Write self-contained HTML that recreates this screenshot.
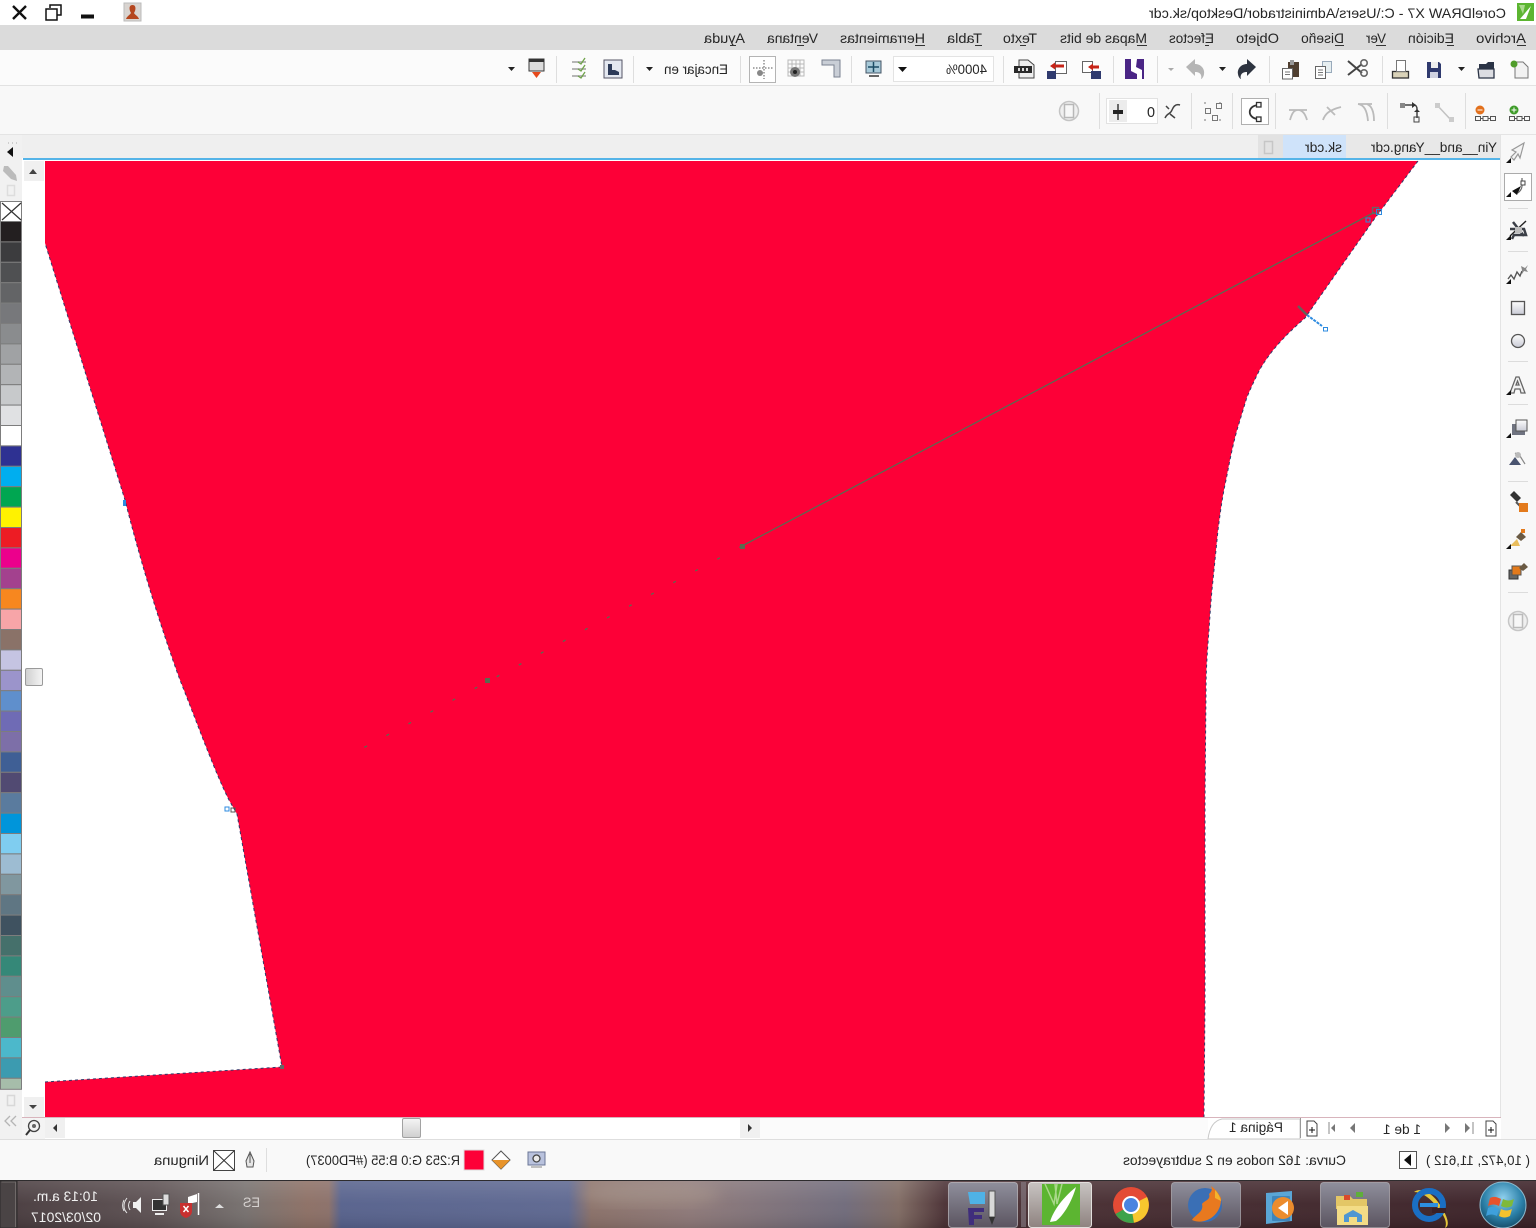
<!DOCTYPE html>
<html><head><meta charset="utf-8"><title>CorelDRAW X7</title>
<style>
html,body{margin:0;padding:0;background:#fff;overflow:hidden}
svg{display:block;position:absolute;left:0;top:0}
text{font-family:"Liberation Sans",sans-serif;font-size:14px;fill:#262626}
</style></head><body>
<svg width="1536" height="1228" viewBox="0 0 1536 1228" xmlns="http://www.w3.org/2000/svg">
<defs>
<linearGradient id="tb" x1="0" x2="1" y1="0" y2="0">
<stop offset="0" stop-color="#46393c"/><stop offset=".1" stop-color="#5c5052"/><stop offset=".16" stop-color="#76706e"/><stop offset=".2" stop-color="#8c6f64"/><stop offset=".214" stop-color="#8a6f68"/><stop offset=".222" stop-color="#56618c"/><stop offset=".37" stop-color="#5d6790"/><stop offset=".385" stop-color="#8a7068"/><stop offset=".45" stop-color="#8d7878"/><stop offset=".55" stop-color="#6f6a7a"/><stop offset=".585" stop-color="#7f6a62"/><stop offset=".615" stop-color="#4a3034"/><stop offset="1" stop-color="#3a2026"/>
</linearGradient>
<linearGradient id="gl" x1="0" x2="0" y1="0" y2="1"><stop offset="0" stop-color="#fff" stop-opacity=".14"/><stop offset=".5" stop-color="#fff" stop-opacity=".03"/><stop offset="1" stop-color="#000" stop-opacity=".1"/></linearGradient>
<linearGradient id="btn" x1="0" x2="0" y1="0" y2="1"><stop offset="0" stop-color="#8f8f9c"/><stop offset="1" stop-color="#5b5460"/></linearGradient>
<linearGradient id="btn2" x1="0" x2="0" y1="0" y2="1"><stop offset="0" stop-color="#c8c4c2"/><stop offset="1" stop-color="#8e827f"/></linearGradient>
<linearGradient id="th" x1="0" x2="0" y1="0" y2="1"><stop offset="0" stop-color="#f5f5f5"/><stop offset="1" stop-color="#cfcfcf"/></linearGradient>
<linearGradient id="th2" x1="0" x2="1" y1="0" y2="0"><stop offset="0" stop-color="#cfcfcf"/><stop offset="1" stop-color="#f5f5f5"/></linearGradient>
<linearGradient id="sh" x1="0" x2="0" y1="0" y2="1"><stop offset="0" stop-color="#fdfdfd"/><stop offset="1" stop-color="#c9cbd6"/></linearGradient>
<radialGradient id="orb" cx=".5" cy=".35" r=".7"><stop offset="0" stop-color="#8fd0ee"/><stop offset=".6" stop-color="#2b80a8"/><stop offset="1" stop-color="#12455f"/></radialGradient>
<filter id="bl"><feGaussianBlur stdDeviation="7"/></filter>
</defs>

<!-- bars -->
<rect width="1536" height="25" fill="#fff"/>
<rect y="25" width="1536" height="25" fill="#dbdbdb"/>
<rect y="50" width="1536" height="35" fill="#fbfbfb"/>
<rect y="85" width="1536" height="1" fill="#e2e2e2"/>
<rect y="86" width="1536" height="48" fill="#f8f8f8"/>
<rect y="134" width="1536" height="1" fill="#e4e4e4"/>
<rect y="135" width="1536" height="23" fill="#efefef"/>

<!-- title -->
<g>
<rect x="1517" y="3" width="17" height="18" fill="#5cb531"/>
<path d="M1520 19 L1531 6 L1526 19Z" fill="#fff"/>
<path d="M1519 5 l4 9 l2-9z" fill="#cfe8b8" opacity=".7"/>
<text transform="matrix(-1 0 0 1 1506 18)" textLength="357" lengthAdjust="spacingAndGlyphs">CorelDRAW X7 - C:\Users\Administrador\Desktop\sk.cdr</text>
<path d="M13 6 L26 19 M26 6 L13 19" stroke="#111" stroke-width="2.4" fill="none"/>
<rect x="46" y="9" width="11" height="11" fill="#fff" stroke="#111" stroke-width="1.5"/>
<path d="M50 8 V5 H61 V15 H57" fill="none" stroke="#111" stroke-width="1.5"/>
<rect x="81" y="14.500" width="13" height="4" fill="#111"/>
<rect x="124" y="3" width="17" height="18" fill="#d9d4d0" stroke="#bbb"/>
<path d="M132.500 5 c3 0 3.500 3 2.500 6 l-1 2 c1 2 4 3 5 6 h-13 c1-3 4-4 5-6 l-1-2 c-1-3-.5-6 2.500-6z" fill="#b5461e"/>
</g>

<!-- menu -->
<g>
<text transform="matrix(-1 0 0 1 1526 43)" textLength="50" lengthAdjust="spacingAndGlyphs">Archivo</text>
<text transform="matrix(-1 0 0 1 1454 43)" textLength="46" lengthAdjust="spacingAndGlyphs">Edición</text>
<text transform="matrix(-1 0 0 1 1386 43)" textLength="20" lengthAdjust="spacingAndGlyphs">Ver</text>
<text transform="matrix(-1 0 0 1 1344 43)" textLength="43" lengthAdjust="spacingAndGlyphs">Diseño</text>
<text transform="matrix(-1 0 0 1 1279 43)" textLength="43" lengthAdjust="spacingAndGlyphs">Objeto</text>
<text transform="matrix(-1 0 0 1 1214 43)" textLength="45" lengthAdjust="spacingAndGlyphs">Efectos</text>
<text transform="matrix(-1 0 0 1 1147 43)" textLength="87" lengthAdjust="spacingAndGlyphs">Mapas de bits</text>
<text transform="matrix(-1 0 0 1 1037 43)" textLength="34" lengthAdjust="spacingAndGlyphs">Texto</text>
<text transform="matrix(-1 0 0 1 982 43)" textLength="35" lengthAdjust="spacingAndGlyphs">Tabla</text>
<text transform="matrix(-1 0 0 1 925 43)" textLength="85" lengthAdjust="spacingAndGlyphs">Herramientas</text>
<text transform="matrix(-1 0 0 1 818 43)" textLength="51" lengthAdjust="spacingAndGlyphs">Ventana</text>
<text transform="matrix(-1 0 0 1 745 43)" textLength="41" lengthAdjust="spacingAndGlyphs">Ayuda</text>
<path d="M1517 45.500h9M1447 45.500h7M1376 45.500h10M1335 45.500h9M1205 45.500h4M1137 45.500h10M1020 45.500h6M975 45.500h7M915 45.500h10M797 45.500h7M730 45.500h6" stroke="#333" stroke-width="1"/>
</g>

<!-- toolbar separators -->
<path d="M1382.500 56v27M1269.500 56v27M1157.500 56v27M1113.500 56v27M1003.500 56v27M851.500 56v27M740.500 56v27M633.500 56v27M556.500 56v27M1465.500 93v36M1387.500 93v36M1275.500 93v36M1232.500 93v36M1191.500 93v36M1099.500 93v36" stroke="#dedede"/>

<!-- row 1 icons -->
<g>
<path d="M1515 62h8l5 5v11h-13z" fill="#f2f2f2" stroke="#777"/><circle cx="1514" cy="64" r="3.500" fill="#4f9c2a"/>
<path d="M1479 64h7l2-2h6v9h-15z" fill="#2b3446"/><path d="M1478 69h16v9h-15z" fill="#dcdde2" stroke="#2b3446" stroke-width="1.300"/>
<path d="M1458 67h7l-3.500 4z" fill="#222"/>
<path d="M1427 62h12l2 2v14h-14z" fill="#2f3a6e"/><rect x="1431" y="62" width="7" height="6" fill="#eee"/><rect x="1430" y="72" width="8" height="6" fill="#cfd2e0"/>
<rect x="1392.500" y="71.500" width="16" height="6.500" fill="#d9d2b8" stroke="#333" stroke-width="1.300"/><rect x="1396.500" y="60.500" width="9" height="11" fill="#fff" stroke="#777"/>
<path d="M1348 61l14 12M1348 75l14-11" stroke="#444" stroke-width="2"/><circle cx="1364" cy="63" r="3.200" fill="none" stroke="#666" stroke-width="1.600"/><circle cx="1364" cy="73" r="3.200" fill="none" stroke="#666" stroke-width="1.600"/>
<rect x="1322.500" y="61.500" width="9" height="11" fill="#e6eef0" stroke="#9ab"/><rect x="1315.500" y="66.500" width="10" height="12" fill="#fff" stroke="#666"/><path d="M1318 70h5M1318 72.500h5M1318 75h5" stroke="#777"/>
<rect x="1288" y="62" width="11" height="15" fill="#4f3f30"/><rect x="1290" y="60" width="4" height="5" fill="#999"/><rect x="1282.500" y="68.500" width="10" height="10.500" fill="#fff" stroke="#666"/><path d="M1285 72h5M1285 74.500h5" stroke="#777"/>
<path d="M1256 67l-9-8v5c-6 0-10 5-9 10c0 2 2 5 3 5c-1-3 0-7 6-7v4z" fill="#2e3440"/>
<path d="M1219 67h7l-3.500 4z" fill="#222"/>
<path d="M1186 67l9-8v5c6 0 10 5 9 10c0 2-2 5-3 5c1-3 0-7-6-7v4z" fill="#b5b5b5"/>
<path d="M1168 68h6l-3 3z" fill="#aaa"/>
<rect x="1125" y="59" width="19" height="20" fill="#4a2585"/><path d="M1131 59h6l-1 8 6 3v9h-5l0-5-6-3z" fill="#fff"/>
<rect x="1055.500" y="61.500" width="11" height="12" fill="#fff" stroke="#666"/><rect x="1047" y="71" width="9" height="8" fill="#2f3a6e"/><path d="M1050 66l5-3.500v2h9v3h-9v2z" fill="#c62418"/>
<rect x="1082.500" y="61.500" width="10" height="11" fill="#fff" stroke="#666"/><rect x="1091" y="71" width="10" height="8" fill="#2f3a6e"/><path d="M1088 67l5-3.500v2h6v3h-6v2z" fill="#c62418"/>
<path d="M1019 60h9l6 5v13h-15z" fill="#eee" stroke="#444"/><rect x="1014" y="66" width="18" height="7" fill="#2a2a2a"/><path d="M1014 69.500l3-3.500v7z" fill="#2a2a2a"/><path d="M1018 68h2v3h-2zM1022 68h2v3h-2zM1026 68h2v3h-2z" fill="#ddd"/>
<rect x="893.500" y="56.500" width="100" height="25" fill="#fff" stroke="#e3e3e3"/>
<text transform="matrix(-1 0 0 1 987 74)" textLength="41" lengthAdjust="spacingAndGlyphs">4000%</text>
<path d="M898 67h9l-4.500 5z" fill="#111"/>
<rect x="866" y="61" width="15" height="12" fill="#a7c9d8" stroke="#456"/><path d="M873.500 62v10M868 67h11" stroke="#1b4c65" stroke-width="1.500"/><rect x="869" y="75" width="10" height="2" fill="#666"/>
<path d="M822 60h18v17h-6v-12h-12z" fill="#c9ced6" stroke="#7a8290"/>
<path d="M788 60h16v16h-16z M788 64h16M788 68h16M788 72h16M792 60v16M796 60v16M800 60v16" fill="none" stroke="#b8b8b8"/><circle cx="795" cy="72" r="5" fill="#777"/><circle cx="795" cy="72" r="2" fill="#222"/>
<rect x="749.500" y="56.500" width="26" height="26" fill="#fff" stroke="#b4b4b4"/><path d="M753 68h20M764 60v19" stroke="#555" stroke-dasharray="1.500 1.500"/><circle cx="760" cy="73" r="3" fill="#888"/>
<text transform="matrix(-1 0 0 1 728 74)" textLength="64" lengthAdjust="spacingAndGlyphs">Encajar en</text>
<path d="M646 67h7l-3.500 4z" fill="#222"/>
<rect x="604" y="60" width="18" height="18" fill="#e4e8f0" stroke="#556"/><path d="M608 64h4v6h3l4 2v3h-11z" fill="#2c3a58"/>
<path d="M572 62h14M572 69h14M572 76h14" stroke="#b6b6b6" stroke-width="2"/><path d="M578 62l3 2 4-6M578 69l3 2 4-6M578 76l3 2 4-6" stroke="#6fa34a" fill="none" stroke-width="1.300"/>
<rect x="529" y="59" width="15" height="12" fill="#dcdcdc" stroke="#3a3a3a"/><rect x="529" y="59" width="15" height="3" fill="#333"/><path d="M532 72h9l-4.500 6z" fill="#e6491c"/>
<path d="M508 67h7l-3.500 4z" fill="#222"/>
</g>

<!-- row 2 icons -->
<g>
<circle cx="1514" cy="110" r="4.500" fill="#3f9c2a"/><path d="M1511.500 110h5M1514 107.500v5" stroke="#fff"/><path d="M1509.500 116.500h5v4h-5zM1517 116.500h5v4h-5zM1524.500 116.500h5v4h-5z" fill="none" stroke="#555"/><path d="M1514.500 118.500h2.500M1522 118.500h2.500" stroke="#555"/>
<circle cx="1480" cy="110" r="4.500" fill="#e2701c"/><path d="M1477.500 110h5" stroke="#fff"/><path d="M1475.500 116.500h5v4h-5zM1483 116.500h5v4h-5zM1490.500 116.500h5v4h-5z" fill="none" stroke="#555"/><path d="M1480.500 118.500h2.500M1488 118.500h2.500" stroke="#555"/>
<path d="M1437 105l14 15" stroke="#c2c2c2" stroke-width="1.500"/><rect x="1435" y="103" width="5" height="5" fill="#ccc"/><rect x="1449" y="117" width="5" height="5" fill="#ccc"/>
<path d="M1404 105h10c2 0 3 2 3 4v9" fill="none" stroke="#444" stroke-width="1.500"/><rect x="1400" y="103" width="5" height="5" fill="#888"/><rect x="1414" y="117" width="5" height="5" fill="none" stroke="#444"/><path d="M1412 102l4 3-4 3zM1414 112l3-3 3 3z" fill="#333"/>
<path d="M1358 104c6 1 9 6 10 17M1367 104c5 2 7 8 7 17M1358 104h14" fill="none" stroke="#bbb" stroke-width="1.800"/>
<path d="M1323 120c2-6 6-10 18-13M1327 107l8 8" fill="none" stroke="#bbb" stroke-width="1.800"/>
<path d="M1290 120c2-7 4-10 8-10s7 3 9 10M1289 110h18" fill="none" stroke="#bbb" stroke-width="1.800"/>
<rect x="1241.500" y="98.500" width="27" height="26" fill="#fff" stroke="#b0b0b0"/><path d="M1258 105C1247 106 1247 118 1258 119" fill="none" stroke="#333" stroke-width="1.800"/><rect x="1256.500" y="102.500" width="4.500" height="4.500" fill="#fff" stroke="#333" stroke-width="1.300"/><rect x="1256.500" y="117" width="4.500" height="4.500" fill="#fff" stroke="#333" stroke-width="1.300"/>
<path d="M1204 103h2M1219 103h2M1204 120h2M1219 120h2" stroke="#777"/><rect x="1205.500" y="108.500" width="5" height="5" fill="none" stroke="#777"/><rect x="1216.500" y="103.500" width="5" height="5" fill="none" stroke="#777"/><rect x="1212.500" y="115.500" width="5" height="5" fill="none" stroke="#777"/>
<path d="M1165 118c3-6 5-3 7-8s5-6 8-5M1166 106l3 3M1170 114l5 4" fill="none" stroke="#444" stroke-width="1.500"/>
<rect x="1106.500" y="98.500" width="51" height="25" fill="#fff" stroke="#e2e2e2"/><rect x="1109" y="100" width="18" height="22" fill="#ececec"/>
<path d="M1118 104v16" stroke="#222" stroke-width="1.300"/><rect x="1113" y="110" width="10" height="4" fill="#222"/>
<text style="font-size:15px" transform="matrix(-1 0 0 1 1155 117)" textLength="8" lengthAdjust="spacingAndGlyphs">0</text>
<circle cx="1069" cy="111" r="9.500" fill="#efefef" stroke="#c4c4c4" stroke-width="1.500"/><rect x="1064.500" y="104.500" width="9" height="13" fill="#f7f7f7" stroke="#b8b8b8" stroke-width="1.500"/>
</g>

<!-- tabs -->
<rect x="1346" y="135" width="154" height="23" fill="#e8e8e8"/>
<rect x="1283" y="135" width="63" height="23" fill="#cfe3fa"/>
<rect x="1258" y="135" width="25" height="23" fill="#e2e2e2"/>
<rect x="1264.500" y="141.500" width="8" height="12" fill="none" stroke="#c6c6c6" stroke-width="1.500"/>
<text transform="matrix(-1 0 0 1 1497 152)" textLength="126" lengthAdjust="spacingAndGlyphs">Yin__and__Yang.cdr</text>
<text transform="matrix(-1 0 0 1 1342 152)" textLength="37" lengthAdjust="spacingAndGlyphs">sk.cdr</text>

<!-- canvas -->
<rect x="22" y="159" width="1479" height="981" fill="#fff"/>
<rect x="23" y="158" width="1478" height="2" fill="#55b4e8"/>
<path d="M45 161H1418L1375 218L1305 318C1290 331 1271 349 1259 371C1254 381 1250 390 1247 397L1237 430C1232 448 1229 465 1226 480C1222 498 1220 515 1218 530L1213 580C1211 598 1210 615 1209 630C1207 655 1206 672 1206 690L1205 800L1205 1000L1204 1117H45V1082L282 1067L237 814L229 800C214 770 198 725 180 680C160 625 140 560 125 500L45 243Z" fill="#fd0037"/>
<path d="M1418 161L1375 218L1305 318C1290 331 1271 349 1259 371C1254 381 1250 390 1247 397L1237 430C1232 448 1229 465 1226 480C1222 498 1220 515 1218 530L1213 580C1211 598 1210 615 1209 630C1207 655 1206 672 1206 690L1205 800L1205 1000L1204 1117M45 1082L282 1067L237 814L229 800C214 770 198 725 180 680C160 625 140 560 125 500L45 243" fill="none" stroke="#2f3a6a" stroke-width="1" stroke-dasharray="3 3"/>
<path d="M1375 212L742 546" stroke="#5a6a50" stroke-width="1.300"/>
<path d="M742 546L350 755" stroke="#5a6a50" stroke-width="1.300" stroke-dasharray="3 22"/>
<rect x="740" y="544" width="5" height="5" fill="#5a6a50"/><rect x="485" y="678" width="5" height="5" fill="#5a6a50"/>
<rect x="1372.500" y="207.500" width="6" height="6" fill="none" stroke="#666" stroke-width="1.400"/>
<rect x="1376.500" y="209.500" width="5" height="5" fill="none" stroke="#2d8be0"/><rect x="1366" y="218" width="4" height="4" fill="none" stroke="#2d8be0"/>
<path d="M1298 306l9 9" stroke="#66605a" stroke-width="2.500"/><path d="M1307 315l15 11" stroke="#2d8be0" stroke-width="2" stroke-dasharray="3 1"/><rect x="1323.500" y="327.500" width="4" height="3.500" fill="none" stroke="#2d8be0"/>
<rect x="225" y="807" width="4" height="4" fill="none" stroke="#2d8be0"/><rect x="231" y="808" width="4" height="4" fill="none" stroke="#555"/><rect x="280" y="1065" width="4" height="4" fill="#666"/>
<rect x="123" y="500" width="3" height="6" fill="#2d8be0"/>

<!-- vertical scrollbar -->
<rect x="24" y="161" width="20" height="20" fill="#f0f0f0"/><path d="M29 174h8l-4-5z" fill="#444"/>
<rect x="24" y="1097" width="20" height="20" fill="#f0f0f0"/><path d="M29 1105h8l-4 4z" fill="#444"/>
<rect x="25.500" y="668.500" width="17" height="17" rx="1.500" fill="url(#th2)" stroke="#9a9a9a"/>

<!-- palette column -->
<rect x="0" y="135" width="22" height="1005" fill="#f1f1f1"/>
<path d="M8 143h1M12 143h1M16 143h1" stroke="#aaa"/>
<path d="M13 147v10l-6-5z" fill="#111"/>
<path d="M4 166l4 0 8 9 1 6-6-2-8-8z" fill="#bbb"/>
<rect x="7.500" y="185.500" width="7" height="10" fill="none" stroke="#ddd" stroke-width="1.500"/>
<g stroke="#7d7d7d" stroke-width="1">
<rect x=".5" y="201.500" width="21" height="20" fill="#fff"/>
<rect x=".5" y="221.500" width="21" height="20.400" fill="#231f20"/>
<rect x=".5" y="241.900" width="21" height="20.400" fill="#3c3c3e"/>
<rect x=".5" y="262.300" width="21" height="20.400" fill="#4f5052"/>
<rect x=".5" y="282.700" width="21" height="20.400" fill="#636466"/>
<rect x=".5" y="303.100" width="21" height="20.400" fill="#77787b"/>
<rect x=".5" y="323.500" width="21" height="20.400" fill="#8a8c8e"/>
<rect x=".5" y="343.900" width="21" height="20.400" fill="#a0a2a4"/>
<rect x=".5" y="364.300" width="21" height="20.400" fill="#b2b4b6"/>
<rect x=".5" y="384.700" width="21" height="20.400" fill="#c7c9cb"/>
<rect x=".5" y="405.100" width="21" height="20.400" fill="#e0e1e3"/>
<rect x=".5" y="425.500" width="21" height="20.400" fill="#ffffff"/>
<rect x=".5" y="445.900" width="21" height="20.400" fill="#2e3192"/>
<rect x=".5" y="466.300" width="21" height="20.400" fill="#00aeef"/>
<rect x=".5" y="486.700" width="21" height="20.400" fill="#00a651"/>
<rect x=".5" y="507.100" width="21" height="20.400" fill="#fff200"/>
<rect x=".5" y="527.500" width="21" height="20.400" fill="#ed1c24"/>
<rect x=".5" y="547.900" width="21" height="20.400" fill="#ec008c"/>
<rect x=".5" y="568.300" width="21" height="20.400" fill="#a3418e"/>
<rect x=".5" y="588.700" width="21" height="20.400" fill="#f7871f"/>
<rect x=".5" y="609.100" width="21" height="20.400" fill="#f7a5a8"/>
<rect x=".5" y="629.500" width="21" height="20.400" fill="#8a7268"/>
<rect x=".5" y="649.900" width="21" height="20.400" fill="#c5c4e2"/>
<rect x=".5" y="670.300" width="21" height="20.400" fill="#9b94cb"/>
<rect x=".5" y="690.700" width="21" height="20.400" fill="#5f8fcc"/>
<rect x=".5" y="711.100" width="21" height="20.400" fill="#6f6bb5"/>
<rect x=".5" y="731.500" width="21" height="20.400" fill="#7d6fa8"/>
<rect x=".5" y="751.900" width="21" height="20.400" fill="#3f5f95"/>
<rect x=".5" y="772.300" width="21" height="20.400" fill="#514a72"/>
<rect x=".5" y="792.700" width="21" height="20.400" fill="#5a7b9e"/>
<rect x=".5" y="813.100" width="21" height="20.400" fill="#0095da"/>
<rect x=".5" y="833.500" width="21" height="20.400" fill="#7fcdf0"/>
<rect x=".5" y="853.900" width="21" height="20.400" fill="#9dbcd2"/>
<rect x=".5" y="874.300" width="21" height="20.400" fill="#80979f"/>
<rect x=".5" y="894.700" width="21" height="20.400" fill="#5f7683"/>
<rect x=".5" y="915.100" width="21" height="20.400" fill="#3f5260"/>
<rect x=".5" y="935.500" width="21" height="20.400" fill="#45706b"/>
<rect x=".5" y="955.900" width="21" height="20.400" fill="#358878"/>
<rect x=".5" y="976.300" width="21" height="20.400" fill="#5f8e8d"/>
<rect x=".5" y="996.700" width="21" height="20.400" fill="#4d9d8a"/>
<rect x=".5" y="1017.100" width="21" height="20.400" fill="#4f9c6e"/>
<rect x=".5" y="1037.500" width="21" height="20.400" fill="#4cb8cb"/>
<rect x=".5" y="1057.900" width="21" height="20.400" fill="#3c9bb0"/>
<rect x=".5" y="1078.300" width="21" height="11" fill="#a6bdaa"/>
</g>
<path d="M2 203l19 17M21 203L2 220" stroke="#333" stroke-width="1.200"/>
<rect x="7.500" y="1095.500" width="7" height="10" fill="none" stroke="#d8d8d8" stroke-width="1.500"/>
<path d="M10 1116l-5 5 5 5M16 1116l-5 5 5 5" fill="none" stroke="#b5b5b5" stroke-width="1.300"/>

<!-- right toolbar -->
<rect x="1501" y="135" width="35" height="1005" fill="#f8f8f8"/>
<rect x="1500" y="135" width="1" height="1005" fill="#e4e4e4"/>
<path d="M1508 208.500h20M1508 251.500h20M1508 361.500h20M1508 404.500h20M1508 481.500h20M1508 592.500h20" stroke="#dcdcdc"/>
<g>
<path d="M1524 143l-4 15-2-4-4 6-3-3 5-5-4-2z" fill="#f4f4f4" stroke="#999" stroke-width="1.200"/>
<path d="M1506 163h5v-5z" fill="#111"/>
<rect x="1504.500" y="173.500" width="27" height="27" fill="#fff" stroke="#ababab"/>
<path d="M1512 191l9-5-4 9z" fill="#111"/><path d="M1522 178v8c0 3-2 5-4 7" fill="none" stroke="#666" stroke-width="1.200"/><rect x="1521" y="181" width="4" height="4" fill="#fff" stroke="#444"/>
<path d="M1506 197h5v-5z" fill="#111"/>
<path d="M1510 229h14l2 6h-12l-2 4M1513 222l11 14" fill="none" stroke="#3b3f47" stroke-width="2.500"/><path d="M1510 236l16-15" stroke="#222" stroke-width="1.400"/><rect x="1515" y="227" width="7" height="6" fill="#bdbdbd"/>
<path d="M1506 240h5v-5z" fill="#111"/>
<path d="M1508 279l3-4 3 4 3-7 3 4 2-5" fill="none" stroke="#555" stroke-width="1.400"/><path d="M1521 266l4 2 3-3-2 4 2 3-4-1-2 3v-4z" fill="#888"/>
<path d="M1506 284h5v-5z" fill="#111"/>
<rect x="1511.500" y="301.500" width="13" height="13" fill="url(#sh)" stroke="#555" stroke-width="1.300"/>
<circle cx="1518" cy="341" r="6.500" fill="url(#sh)" stroke="#555" stroke-width="1.300"/>
<path d="M1510 393l6-16h3l6 16h-4l-1-4h-5l-1 4zM1516 385h3l-1.500-4z" fill="#f2f2f2" stroke="#666" stroke-width="1.300"/>
<path d="M1506 395h5v-5z" fill="#111"/>
<rect x="1512" y="424" width="13" height="11" fill="#6f7380"/><rect x="1516" y="420" width="11" height="11" fill="url(#sh)" stroke="#555"/>
<path d="M1506 438h5v-5z" fill="#111"/>
<path d="M1509 465l6-8 6 8z" fill="#4a5470"/><path d="M1515 453l5 3 5 8" fill="none" stroke="#888" stroke-width="1.200"/><circle cx="1518" cy="455" r="3" fill="#bbb"/>
<path d="M1510 495l7 7 4-4-7-7z" fill="#333"/><path d="M1516 502l4 4" stroke="#555" stroke-width="2"/><rect x="1519" y="503" width="9" height="9" fill="#e37a1c"/>
<path d="M1510 546l7-7 3 7z" fill="#e9bd5c"/><path d="M1516 537l5-5 5 5-5 4z" fill="#6a5a44"/><rect x="1521" y="529" width="4" height="4" fill="#e37a1c"/>
<path d="M1506 549h5v-5z" fill="#111"/>
<rect x="1509" y="570" width="9" height="9" fill="#666" stroke="#333"/><rect x="1512" y="566" width="9" height="9" fill="#e37a1c" stroke="#555"/><path d="M1519 568l5-5 4 4-5 4z" fill="#6a5a44"/>
<circle cx="1518" cy="621" r="9.500" fill="#efefef" stroke="#c6c6c6" stroke-width="1.500"/><rect x="1513.500" y="614.500" width="9" height="13" fill="#f7f7f7" stroke="#bbb" stroke-width="1.500"/>
</g>

<!-- horizontal scrollbar row -->
<rect x="22" y="1117" width="1479" height="1" fill="#d8b4bc"/>
<rect x="22" y="1118" width="1479" height="21" fill="#fff"/>
<rect x="22" y="1118" width="23" height="21" fill="#f4f4f4"/>
<circle cx="34" cy="1126" r="5.500" fill="none" stroke="#444" stroke-width="1.300"/><circle cx="34" cy="1126" r="2" fill="#666"/><path d="M30 1130l-4 5" stroke="#333" stroke-width="2"/>
<rect x="45" y="1118" width="20" height="20" fill="#f0f0f0"/><path d="M57 1124v8l-4-4z" fill="#333"/>
<rect x="740" y="1118" width="20" height="20" fill="#f0f0f0"/><path d="M748 1124v8l4-4z" fill="#333"/>
<rect x="402.500" y="1118.500" width="18" height="19" rx="1.500" fill="url(#th)" stroke="#a2a2a2"/>
<path d="M765 1124v1M765 1128v1M765 1132v1" stroke="#999"/>
<rect x="760" y="1118" width="448" height="21" fill="#fbfbfb"/>
<path d="M1208 1139c1-8 4-18 14-20h78v20z" fill="#fff" stroke="#c8c8c8" stroke-width="1"/>
<text transform="matrix(-1 0 0 1 1283 1132)" textLength="54" lengthAdjust="spacingAndGlyphs">Página 1</text>
<path d="M1300.500 1118v20" stroke="#999"/>
<path d="M1307 1121h7l3 3v12h-10z" fill="#fff" stroke="#444"/><path d="M1309 1130h6M1312 1127v6" stroke="#111"/>
<path d="M1329 1122v12" stroke="#888"/><path d="M1332 1124v8l4-4z" fill="#777" transform="matrix(-1 0 0 1 2667 0)"/>
<path d="M1355 1123v10l-5-5z" fill="#777"/>
<text transform="matrix(-1 0 0 1 1421 1134)" textLength="38" lengthAdjust="spacingAndGlyphs">1 de 1</text>
<path d="M1445 1123v10l5-5z" fill="#777"/>
<path d="M1465 1123v10l5-5z" fill="#777"/><path d="M1473 1122v12" stroke="#888"/>
<path d="M1486 1121h7l3 3v12h-10z" fill="#fff" stroke="#444"/><path d="M1488 1130h6M1491 1127v6" stroke="#111"/>

<!-- status bar -->
<rect y="1139" width="1536" height="1" fill="#dedede"/>
<rect y="1140" width="1536" height="40" fill="#f9f9f9"/>
<text transform="matrix(-1 0 0 1 1530 1165)" textLength="104" lengthAdjust="spacingAndGlyphs">( 10,472, 11,612 )</text>
<rect x="1399.500" y="1151.500" width="17" height="17" fill="#fff" stroke="#555"/><path d="M1411 1154v12l-7-6z" fill="#111"/>
<text transform="matrix(-1 0 0 1 1346 1165)" textLength="223" lengthAdjust="spacingAndGlyphs">Curva: 162 nodos en 2 subtrayectos</text>
<rect x="528" y="1152" width="17" height="13" fill="#b9c2dd" stroke="#6b7696"/><circle cx="536.500" cy="1158.500" r="3.500" fill="#e9e9e9" stroke="#444" stroke-width="1.300"/><path d="M531 1167h11" stroke="#888"/>
<path d="M501 1151l9 9-9 9-9-9z" fill="#fff" stroke="#555"/><path d="M492 1160h18l-9 9z" fill="#e7932a"/>
<rect x="464" y="1150" width="20" height="20" fill="#fd0037" stroke="#ddd"/>
<text transform="matrix(-1 0 0 1 460 1165)" textLength="154" lengthAdjust="spacingAndGlyphs">R:253 G:0 B:55 (#FD0037)</text>
<path d="M266.500 1148v24" stroke="#dedede"/>
<path d="M250 1152l4 9-1 6h-6l-1-6z" fill="#e6e6e6" stroke="#555"/><path d="M250 1154v9" stroke="#555"/>
<rect x="213.500" y="1150.500" width="21" height="20" fill="#fff" stroke="#444"/><path d="M214 1151l20 19M234 1151l-20 19" stroke="#333"/>
<text transform="matrix(-1 0 0 1 209 1165)" textLength="55" lengthAdjust="spacingAndGlyphs">Ninguna</text>

<!-- taskbar -->
<rect y="1180" width="1536" height="48" fill="url(#tb)"/>
<ellipse cx="650" cy="1195" rx="70" ry="12" fill="#a08e84" filter="url(#bl)" opacity=".6"/>
<rect y="1180" width="1536" height="48" fill="url(#gl)"/>
<rect y="1180" width="1536" height="1" fill="#2e2c2e"/>
<rect x="0" y="1181" width="17" height="47" fill="#4a4445" stroke="#2c2a2a"/>
<path d="M1.500 1182h14v45" fill="none" stroke="#8a8482" opacity=".6"/>
<!-- clock -->
<g>
<text style="fill:#f2f2f2" transform="matrix(-1 0 0 1 98 1201)" textLength="65" lengthAdjust="spacingAndGlyphs">10:13 a.m.</text>
<text style="fill:#f2f2f2" transform="matrix(-1 0 0 1 101 1222)" textLength="70" lengthAdjust="spacingAndGlyphs">02/03/2017</text>
<path d="M141 1197v16l-5-5h-3v-6h3z" fill="#f0f0f0"/><path d="M130 1201c-2 3-2 6 0 9M127 1198c-4 5-4 11 0 15M124 1200c-2 4-2 7 0 11" fill="none" stroke="#e6e6e6" stroke-width="1"/>
<rect x="152.500" y="1199.500" width="14" height="11" fill="#333" stroke="#eee"/><rect x="163" y="1194" width="6" height="11" fill="#ddd" stroke="#555"/><path d="M155 1214h9" stroke="#eee" stroke-width="2"/>
<path d="M198.500 1193v22" stroke="#fff" stroke-width="1.500"/><path d="M197 1194l-9 3v7l9-2z" fill="#fff"/><path d="M180 1203h12v8c0 4-3 6-6 7c-3-1-6-3-6-7z" fill="#c93030"/><path d="M183.500 1206l5 6M188.500 1206l-5 6" stroke="#fff" stroke-width="1.500"/>
<path d="M215 1208h9l-4.500-4z" fill="#ddd"/>
<text style="fill:#d6d2d0" transform="matrix(-1 0 0 1 260 1207)" textLength="17" lengthAdjust="spacingAndGlyphs">ES</text>
</g>
<!-- task buttons -->
<rect x="948.500" y="1182.500" width="69" height="45" rx="3" fill="url(#btn)" stroke="#cfcfd4" stroke-opacity=".6"/>
<rect x="1021" y="1182" width="5" height="45" fill="#8a8088" opacity=".6"/>
<rect x="1028.500" y="1182.500" width="63" height="45" rx="3" fill="url(#btn2)" stroke="#e2dedc"/>
<rect x="1171.500" y="1182.500" width="69" height="45" rx="3" fill="url(#btn)" stroke="#bfbfc4" stroke-opacity=".6"/>
<rect x="1320.500" y="1182.500" width="69" height="45" rx="3" fill="url(#btn)" stroke="#bfbfc4" stroke-opacity=".6"/>
<!-- app icons -->
<path d="M968 1192h17v12h-15z" fill="#4fb2e6"/><path d="M968 1208h16v4h-10v3h8v4h-8v6h-5z" fill="#3f2d7c"/>
<rect x="989" y="1191" width="6" height="26" fill="#d8d8d8" stroke="#555"/><path d="M989 1217h6l-3 8z" fill="#333"/>
<rect x="1042" y="1184" width="38" height="41" fill="#5cb531"/>
<path d="M1050 1222c2-8 10-22 26-35c-4 14-12 28-20 34z" fill="#fff"/>
<path d="M1045 1184l9 20 3-20M1055 1184l2 20 5-20" stroke="#a9d88a" stroke-width="1.500" fill="none"/>
<circle cx="1131" cy="1205" r="18" fill="#e44b35"/>
<path d="M1131 1205L1115.500 1214A18 18 0 0 0 1134 1222.700Z" fill="#3da34a"/>
<path d="M1131 1205L1134 1222.700A18 18 0 0 0 1147 1197Z" fill="#f7c72e"/>
<circle cx="1131" cy="1205" r="9" fill="#fff"/><circle cx="1131" cy="1205" r="7" fill="#4a84e0"/>
<circle cx="1205" cy="1205" r="17" fill="#3a6fb5"/><path d="M1192 1220c14 6 30-6 29-22c-3-6-7-10-10-12c2 4 0 6-2 8c2 6-4 6-7 10c2 8-6 10-10 16z" fill="#e8791f"/><path d="M1215 1190c3 3 5 7 6 11l-6-3z" fill="#f4b32c"/>
<path d="M1266 1193l26-2v30l-26 3z" fill="#5aa6d6"/><rect x="1272" y="1196" width="18" height="25" rx="1" fill="#3e86bd"/><circle cx="1283" cy="1208" r="11" fill="#ec8c2d"/><path d="M1288 1201v14l-10-7z" fill="#fff"/>
<path d="M1336 1196h14l3 3h14v10h-31z" fill="#e3c666"/><rect x="1337" y="1206" width="31" height="19" fill="#f3dc86"/><rect x="1344" y="1195" width="6" height="5" fill="#d94a2a"/><rect x="1356" y="1192" width="7" height="5" fill="#5fae3a"/><path d="M1344 1222v-7l9-5 9 5v7h-5v-5h-8v5z" fill="#4f97d2"/>
<path d="M1414 1192c8-6 20 2 28 16c6 10 8 18 3 20c3-6-2-14-7-20c-8-10-16-16-24-16z" fill="#e6c73a"/>
<circle cx="1429" cy="1205" r="14" fill="none" stroke="#1a6fc4" stroke-width="6"/><rect x="1420" y="1203" width="18" height="4" fill="#2d8fe0"/><rect x="1432" y="1208" width="14" height="5" fill="#3a2026"/>
<circle cx="1503" cy="1205" r="23" fill="url(#orb)" stroke="#8cb8cc" stroke-width="1"/>
<path d="M1490 1198c4-2 7-1 11 1l-2 7c-4-2-7-2-11 0z" fill="#e8532c"/>
<path d="M1503 1199c4 2 7 2 11 0l-2 7c-4 2-7 2-11 0z" fill="#7fb93a"/>
<path d="M1488 1208c4-2 7-1 11 1l-2 7c-4-2-7-2-11 0z" fill="#3fa0dc"/>
<path d="M1501 1209c4 2 7 2 11 0l-2 7c-4 2-7 2-11 0z" fill="#f2c22e"/>
</svg>
</body></html>
